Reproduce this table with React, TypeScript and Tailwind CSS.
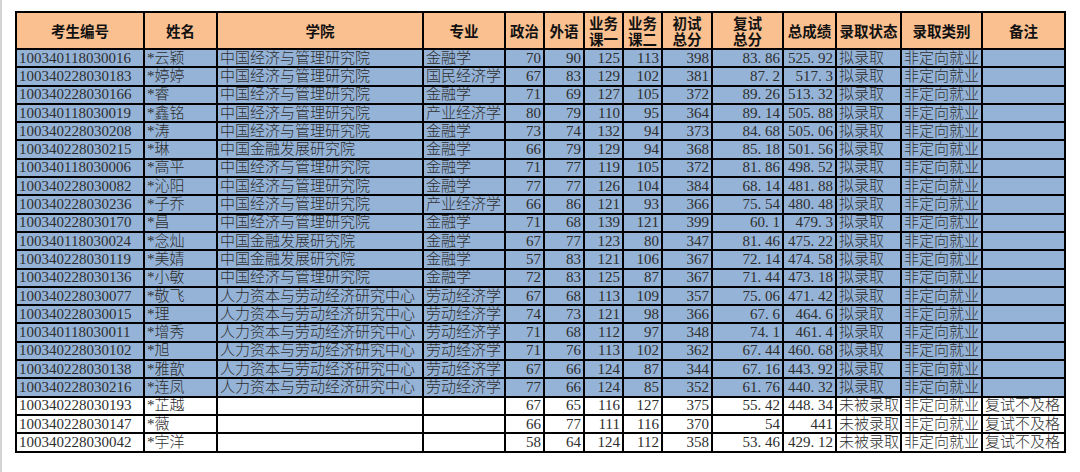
const cols = [128, 73, 206, 82, 39, 40, 39, 39, 50, 71, 53, 65, 81, 83];

const heads: string[][] = [
  ["考生编号"], ["姓名"], ["学院"], ["专业"], ["政治"], ["外语"],
  ["业务", "课一"], ["业务", "课二"], ["初试", "总分"], ["复试", "总分"],
  ["总成绩"], ["录取状态"], ["录取类别"], ["备注"],
];

const JG = "中国经济与管理研究院";
const JR = "中国金融发展研究院";
const RL = "人力资本与劳动经济研究中心";

type Row = [string, string, string, string, number, number, number, number, number, string, string];

const admitted: Row[] = [
  ["100340118030016", "*云颖", JG, "金融学", 70, 90, 125, 113, 398, "83.86", "525.92"],
  ["100340228030183", "*婷婷", JG, "国民经济学", 67, 83, 129, 102, 381, "87.2", "517.3"],
  ["100340228030166", "*睿", JG, "金融学", 71, 69, 127, 105, 372, "89.26", "513.32"],
  ["100340118030019", "*鑫铭", JG, "产业经济学", 80, 79, 110, 95, 364, "89.14", "505.88"],
  ["100340228030208", "*涛", JG, "金融学", 73, 74, 132, 94, 373, "84.68", "505.06"],
  ["100340228030215", "*琳", JR, "金融学", 66, 79, 129, 94, 368, "85.18", "501.56"],
  ["100340118030006", "*高平", JG, "金融学", 71, 77, 119, 105, 372, "81.86", "498.52"],
  ["100340228030082", "*沁阳", JG, "金融学", 77, 77, 126, 104, 384, "68.14", "481.88"],
  ["100340228030236", "*子乔", JG, "产业经济学", 66, 86, 121, 93, 366, "75.54", "480.48"],
  ["100340228030170", "*昌", JG, "金融学", 71, 68, 139, 121, 399, "60.1", "479.3"],
  ["100340118030024", "*念灿", JR, "金融学", 67, 77, 123, 80, 347, "81.46", "475.22"],
  ["100340228030119", "*美婧", JR, "金融学", 57, 83, 121, 106, 367, "72.14", "474.58"],
  ["100340228030136", "*小敏", JG, "金融学", 72, 83, 125, 87, 367, "71.44", "473.18"],
  ["100340228030077", "*敬飞", RL, "劳动经济学", 67, 68, 113, 109, 357, "75.06", "471.42"],
  ["100340228030015", "*理", RL, "劳动经济学", 74, 73, 121, 98, 366, "67.6", "464.6"],
  ["100340118030011", "*增秀", RL, "劳动经济学", 71, 68, 112, 97, 348, "74.1", "461.4"],
  ["100340228030102", "*旭", RL, "劳动经济学", 71, 76, 113, 102, 362, "67.44", "460.68"],
  ["100340228030138", "*雅歆", RL, "劳动经济学", 67, 66, 124, 87, 344, "67.16", "443.92"],
  ["100340228030216", "*连凤", RL, "劳动经济学", 77, 66, 124, 85, 352, "61.76", "440.32"],
];

const rejected: Row[] = [
  ["100340228030193", "*芷越", "", "", 67, 65, 116, 127, 375, "55.42", "448.34"],
  ["100340228030147", "*薇", "", "", 66, 77, 111, 116, 370, "54", "441"],
  ["100340228030042", "*宇洋", "", "", 58, 64, 124, 112, 358, "53.46", "429.12"],
];

// SimSun-like half-width dot
function Num({ v }: { v: string | number }) {
  const s = String(v);
  const [a, b] = s.split(".");
  if (b === undefined) return <>{a}</>;
  return (
    <>
      {a}
      <span className="inline-block w-[0.5em] text-left">.</span>
      {b}
    </>
  );
}

const td = "border-2 border-black px-[2px] whitespace-nowrap overflow-hidden";

function DataRow({ r, blue, status, note }: { r: Row; blue: boolean; status: string; note: string }) {
  return (
    <tr className={`h-[18.3px] ${blue ? "bg-[#95b3d7]" : "bg-white"}`}>
      <td className={td}>{r[0]}</td>
      <td className={td}>{r[1]}</td>
      <td className={td}>{r[2]}</td>
      <td className={td}>{r[3]}</td>
      {[r[4], r[5], r[6], r[7], r[8]].map((n, i) => (
        <td key={i} className={`${td} text-right`}>{n}</td>
      ))}
      <td className={`${td} text-right`}><Num v={r[9]} /></td>
      <td className={`${td} text-right`}><Num v={r[10]} /></td>
      <td className={td}>{status}</td>
      <td className={td}>非定向就业</td>
      <td className={td}>{note}</td>
    </tr>
  );
}

export default function App() {
  return (
    <div className="w-[1080px] h-[472px] bg-white overflow-hidden flex">
      <div className="w-[3px] border-l-2 border-[#d4d4d4]" />
      <div className="pl-[12px] pt-[11px]">
        <table
          className="table-fixed border-collapse text-[15px] leading-[15px] text-[#2e2e2e] font-light font-['Liberation_Serif','Noto_Sans_CJK_SC',serif]"
          style={{ width: 1049 }}
        >
          <colgroup>
            {cols.map((w, i) => (
              <col key={i} style={{ width: w }} />
            ))}
          </colgroup>
          <thead>
            <tr className="h-[37px] bg-[#fac090]">
              {heads.map((h, i) => (
                <th
                  key={i}
                  className="border-2 border-black p-0 text-center font-bold text-[14.5px] leading-[16px] text-[#111] font-['Noto_Sans_CJK_SC',sans-serif]"
                >
                  {h.map((l, j) => (
                    <div key={j}>{l}</div>
                  ))}
                </th>
              ))}
            </tr>
          </thead>
          <tbody>
            {admitted.map((r) => (
              <DataRow key={r[0]} r={r} blue status="拟录取" note="" />
            ))}
            {rejected.map((r) => (
              <DataRow key={r[0]} r={r} blue={false} status="未被录取" note="复试不及格" />
            ))}
          </tbody>
        </table>
      </div>
    </div>
  );
}
